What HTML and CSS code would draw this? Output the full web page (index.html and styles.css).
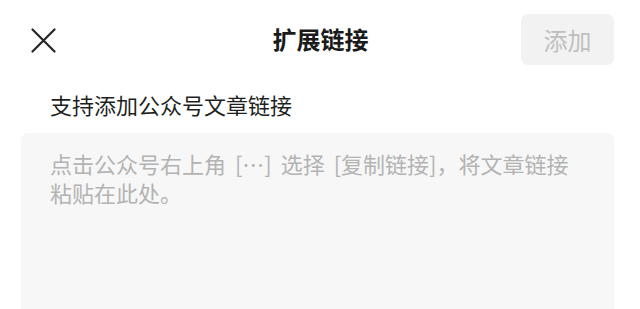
FILE: index.html
```html
<!DOCTYPE html>
<html lang="zh-CN">
<head>
<meta charset="utf-8">
<link rel="stylesheet" href="styles.css">
</head>
<body>
<div class="page">
  <header class="bar">
    <span class="close">
      <svg width="25" height="25" viewBox="0 0 25 25"><path d="M1.5 1.5 L23.5 23.5 M23.5 1.5 L1.5 23.5" stroke="#262626" stroke-width="2.2" stroke-linecap="round" fill="none"/></svg>
    </span>
    <h1 class="title">扩展链接</h1>
    <button class="add">添加</button>
  </header>
  <p class="hint">支持添加公众号文章链接</p>
  <div class="field">
    <p class="placeholder">点击公众号右上角 […] 选择 [复制链接]，将文章链接粘贴在此处。</p>
  </div>
</div>
</body>
</html>
```
FILE: styles.css
```css
html, body {
  margin: 0;
  padding: 0;
  background: #ffffff;
  overflow: hidden;
}
body {
  font-family: "Noto Sans CJK SC", "Noto Sans", sans-serif;
  width: 640px;
  height: 309px;
}
.page {
  display: flex;
  flex-direction: column;
}
.bar {
  display: grid;
  grid-template-columns: 1fr auto 1fr;
  align-items: center;
  padding: 13px 26px 0 31px;
  height: 51px;
}
.close {
  display: flex;
  align-items: center;
  justify-self: start;
  padding-top: 2px;
}
.title {
  margin: 0 0 0 -4px;
  font-size: 24px;
  font-weight: 700;
  color: #1a1a1a;
  line-height: 51px;
  padding-bottom: 2px;
}
.add {
  justify-self: end;
  width: 93px;
  height: 51px;
  border: none;
  border-radius: 7px;
  background: #f2f2f2;
  color: #bfbfbf;
  font-family: inherit;
  font-size: 24px;
  padding: 0;
}
.hint {
  margin: 25px 0 0 50px;
  font-size: 22px;
  line-height: 30px;
  color: #1f1f1f;
}
.field {
  margin: 14px 26px 0 21px;
  height: 170px;
  background: #f7f7f7;
  border-radius: 7px;
  padding: 16px 32px 0 29px;
}
.placeholder {
  margin: 0;
  font-size: 22px;
  line-height: 29px;
  color: #b3b3b3;
  word-spacing: 4px;
}
```
